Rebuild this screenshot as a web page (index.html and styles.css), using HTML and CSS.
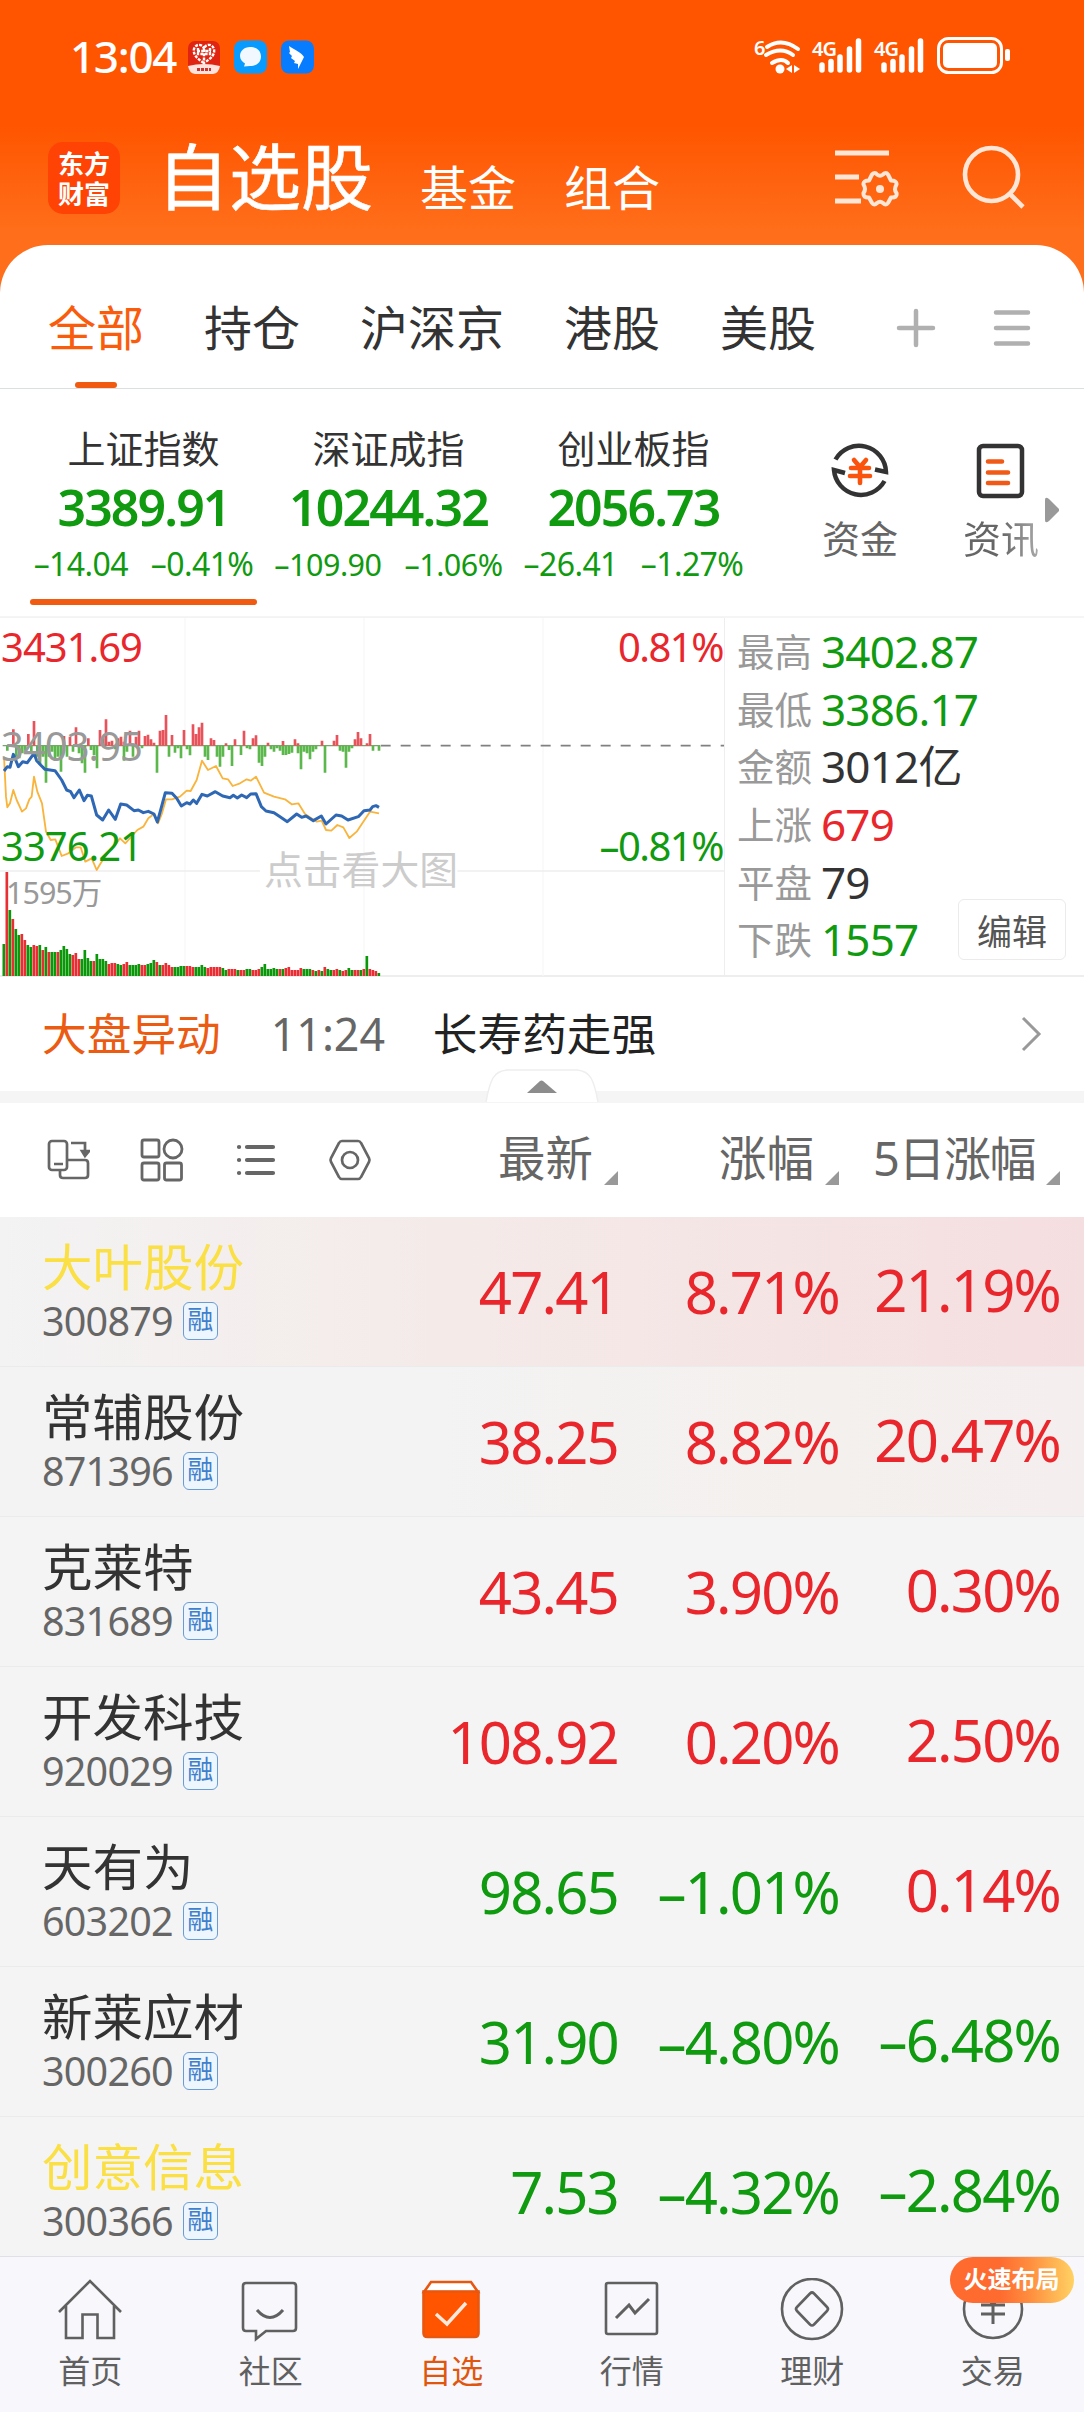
FILE: index.html
```html
<!DOCTYPE html>
<html lang="zh-CN">
<head>
<meta charset="utf-8">
<title>自选股</title>
<link rel="stylesheet" href="styles.css">
</head>
<body>
<header class="hero">
  <div class="status">
    <span class="clock">13:04</span>
    <svg class="apps" width="126" height="34" viewBox="0 0 126 34">
      <rect width="32" height="32" y="1" rx="7" fill="#e02412"/>
      <g fill="none" stroke="#fff" stroke-width="2.4" stroke-dasharray="3 1.2"><path d="M16 23C8 18 5 14 6 9c2-6 9-5 10 0 1-5 8-6 10 0 1 5-2 9-10 14z"/><path d="M10 8v6h5M22 8v6h-5M16 9v12M9 11h14"/></g>
      <path d="M0 26q16-4 32 0-1 7-7 8H7q-6-1-7-8z" fill="#ffe3dc"/><path d="M9 29.500h14" stroke="#c33" stroke-width="3" stroke-dasharray="3 1"/>
      <rect x="46" width="33" height="33" y=".5" rx="8" fill="#079bff"/>
      <path d="M62 7c7 0 11 4 11 9.500S69 26 62 26l-6 .5 1-3c-3-2-5-4-5-7.500C52 11 56 7 62 7z" fill="#f1f8ff"/>
      <rect x="93" width="33" height="33" y=".5" rx="8" fill="#087cff"/>
      <path d="M101 6c6 4 12 6 15 11l-6 12v-5l-4-1 1-2-4-3 1-2-3-3 1-1z" fill="#fff"/>
    </svg>
    <svg class="signals" width="260" height="56" viewBox="0 -8 260 56" fill="#fff" stroke-linecap="round">
      <text x="4" y="17" class="sig-text">6</text>
      <g fill="none" stroke="#fff" stroke-width="4"><path d="M17 9Q32-1 48 11M16 17q15-9 27 0M22 25q10-6 16 0"/></g>
      <circle cx="30" cy="31" r="4.500"/><path d="M36 31l6-4v8zM50 31l-6-4v8z"/>
      <text x="62" y="18" class="sig-text">4G</text>
      <g stroke="#fff" stroke-width="5.500"><path d="M72 27v5M81 23.500v8.500M90 19v13M99.500 11v21M108.500 3v29"/></g>
      <text x="124" y="18" class="sig-text">4G</text>
      <g stroke="#fff" stroke-width="5.500"><path d="M134 27v5M143 23.500v8.500M152 19v13M161.500 11v21M170.500 3v29"/></g>
      <rect x="188.500" y=".5" width="63" height="34" rx="10" fill="none" stroke="#fff" stroke-width="3"/>
      <rect x="193" y="5" width="54" height="25" rx="5"/><rect x="255" y="11" width="5" height="12" rx="2"/>
    </svg>
  </div>
  <div class="topnav">
    <div class="logo"><span>东方</span><span>财富</span></div>
    <span class="title">自选股</span>
    <span class="subtitle">基金</span>
    <span class="subtitle">组合</span>
    <svg class="ico-filter" width="64" height="58" viewBox="0 0 64 58" fill="none" stroke="#ffe6d6" stroke-width="5">
      <path d="M0 4h54M0 28h24M0 52h26"/>
      <path stroke-width="4" stroke-linejoin="round" d="M37 25.500q3-3 5 0 3 2.500 6 0 3-3 5 0l3 6q6 0 5.500 4-3 5 0 8.500 1 5-5.500 4.500l-3 5.500q-2 3-5 0-3-2.500-6 0-3 3-5 0l-3-5.500q-6 .5-5.500-4.500 3-4 0-8.500-.5-4 5.500-4z"/><circle cx="45" cy="40" r="4" fill="#ffe6d6" stroke="none"/>
    </svg>
    <svg class="ico-search" width="64" height="64" viewBox="0 0 64 64" fill="none" stroke="#ffe6d6" stroke-width="4.600"><circle cx="29.500" cy="29.500" r="26.500"/><path d="M48 49l13 13"/></svg>
  </div>
</header>

<nav class="tabs">
  <span class="tab active">全部</span><span class="tab">持仓</span><span class="tab">沪深京</span><span class="tab">港股</span><span class="tab">美股</span>
  <svg class="ico-plus" width="40" height="40" viewBox="0 0 40 40" stroke="#b0b0b0" stroke-width="4.500" stroke-linecap="round"><path d="M3 20h34M20 3v34"/></svg>
  <svg width="38" height="40" viewBox="0 0 38 40" stroke="#b0b0b0" stroke-width="4.500" stroke-linecap="round"><path d="M3 4.500h32M3 20h32M3 35.500h32"/></svg>
</nav>

<section class="indices">
  <div class="index active"><span class="iname">上证指数</span><span class="ival">3389.91</span><span class="isub"><b>–14.04</b><b>–0.41%</b></span></div>
  <div class="index"><span class="iname">深证成指</span><span class="ival">10244.32</span><span class="isub small"><b>–109.90</b><b>–1.06%</b></span></div>
  <div class="index"><span class="iname">创业板指</span><span class="ival">2056.73</span><span class="isub"><b>–26.41</b><b>–1.27%</b></span></div>
  <div class="quick funds">
    <svg width="60" height="60" viewBox="0 0 60 60" fill="none" stroke="#333" stroke-width="4.500"><path d="M5.500 18.500A27 27 0 0 1 56 31l-11-2.500M54.500 40A27 27 0 0 1 4 29l11 3"/><g stroke="#f9530d" stroke-width="4.600" stroke-linecap="round"><path d="M24 19l6 7 6-7M21 27h18M20 35h20M30 27v15"/></g></svg>
    <span>资金</span>
  </div>
  <div class="quick news">
    <svg width="50" height="60" viewBox="0 0 50 60" fill="none" stroke="#333" stroke-width="4.500"><rect x="3" y="5" width="43" height="50" rx="4"/><g stroke="#f15a16" stroke-width="4.600" stroke-linecap="round"><path d="M12 20.500h14M12 31.500h20M12 42h20"/></g></svg>
    <span class="fade">资讯</span>
  </div>
  <svg class="more" width="16" height="26" viewBox="0 0 16 26"><path d="M1 3Q1-1 5 2L15 12v2L5 24Q1 27 1 23z" fill="#999"/></svg>
</section>

<section class="market">
  <div class="chart">
    <svg id="plot" width="724" height="359" viewBox="0 21 2172 1077" preserveAspectRatio="none"></svg>
    <span class="lbl hi">3431.69</span><span class="lbl hi-p">0.81%</span>
    <span class="lbl mid">3403.95</span>
    <span class="lbl lo">3376.21</span><span class="lbl lo-p">–0.81%</span>
    <span class="lbl vol">1595万</span><span class="hint">点击看大图</span>
  </div>
  <div class="stats">
    <div><i>最高</i><span class="down">3402.87</span></div>
    <div><i>最低</i><span class="down">3386.17</span></div>
    <div><i>金额</i><span>3012亿</span></div>
    <div><i>上涨</i><span class="up">679</span></div>
    <div><i>平盘</i><span>79</span></div>
    <div><i>下跌</i><span class="down">1557</span></div>
    <button class="edit">编辑</button>
  </div>
</section>

<section class="alert">
  <span class="alert-tag">大盘异动</span><span class="alert-time">11:24</span><span class="alert-text">长寿药走强</span>
  <svg width="22" height="36" viewBox="0 0 22 36" fill="none" stroke="#999" stroke-width="3"><path d="M2 2l16 16L2 34"/></svg>
</section>
<div class="divider"><svg class="handle" width="114" height="34" viewBox="0 0 114 34"><path d="M1 33Q4 16 8 9T22 1h70q10 1 14 8t7 24" fill="#fff" stroke="#eee" stroke-width="1.500"/><path d="M42 24l13-12q1.500-1 3 0l14 12z" fill="#8c8c8c"/></svg></div>

<section class="toolbar">
  <div class="tools">
    <svg width="44" height="44" viewBox="0 0 44 44" fill="none" stroke="#666" stroke-width="2.700"><rect x="3" y="3" width="18" height="29" rx="3"/><path d="M8 26h9M25 5h14v12M21 22h18q3 0 3 3v12q0 3-3 3H17q-3 0-3-3v-5"/><path d="M36 13h7l-4 5z" fill="#666"/></svg>
    <svg width="44" height="44" viewBox="0 0 44 44" fill="none" stroke="#666" stroke-width="2.800"><rect x="2" y="2" width="17" height="17" rx="2"/><circle cx="33" cy="11" r="9"/><rect x="2" y="25" width="17" height="17" rx="2"/><rect x="24.500" y="25" width="17" height="17" rx="2"/></svg>
    <svg width="44" height="44" viewBox="0 0 44 44" fill="none" stroke="#666" stroke-width="4.200" stroke-linecap="round"><path d="M13 9h26M13 22h26M13 35h26M5 9h.1M5 22h.1M5 35h.1"/></svg>
    <svg width="44" height="44" viewBox="0 0 44 44" fill="none" stroke="#666" stroke-width="2.700"><path d="M14 3h16q2 0 3 2l8 15q1 2 0 4l-8 15q-1 2-3 2H14q-2 0-3-2L3 24q-1-2 0-4l8-15q1-2 3-2z"/><circle cx="22" cy="22" r="8"/></svg>
  </div>
  <span class="sort">最新</span><span class="sort">涨幅</span><span class="sort days">5日涨幅</span>
</section>

<main class="list">
  <div class="row hot"><div class="who"><span class="name marked">大叶股份</span><span class="code">300879<em>融</em></span></div><span class="up">47.41</span><span class="up">8.71%</span><span class="f up">21.19%</span></div>
  <div class="row warm"><div class="who"><span class="name">常辅股份</span><span class="code">871396<em>融</em></span></div><span class="up">38.25</span><span class="up">8.82%</span><span class="f up">20.47%</span></div>
  <div class="row"><div class="who"><span class="name">克莱特</span><span class="code">831689<em>融</em></span></div><span class="up">43.45</span><span class="up">3.90%</span><span class="f up">0.30%</span></div>
  <div class="row"><div class="who"><span class="name">开发科技</span><span class="code">920029<em>融</em></span></div><span class="up">108.92</span><span class="up">0.20%</span><span class="f up">2.50%</span></div>
  <div class="row"><div class="who"><span class="name">天有为</span><span class="code">603202<em>融</em></span></div><span class="down">98.65</span><span class="down">–1.01%</span><span class="f up">0.14%</span></div>
  <div class="row"><div class="who"><span class="name">新莱应材</span><span class="code">300260<em>融</em></span></div><span class="down">31.90</span><span class="down">–4.80%</span><span class="f down">–6.48%</span></div>
  <div class="row last"><div class="who"><span class="name marked">创意信息</span><span class="code">300366<em>融</em></span></div><span class="down">7.53</span><span class="down">–4.32%</span><span class="f down">–2.84%</span></div>
</main>

<footer class="tabbar">
  <div><svg width="66" height="66" viewBox="0 0 66 66"><path d="M2 34L33 3l31 31M9 28v32h16.500V36.500h15V60H57V28"/></svg><span>首页</span></div>
  <div><svg width="66" height="66" viewBox="0 0 66 66"><path d="M8 5h47q3 0 3 3v42q0 3-3 3H28l-10 8v-8H8q-3 0-3-3V8q0-3 3-3z"/><path d="M19 32q13 15 26 0" stroke-width="3"/></svg><span>社区</span></div>
  <div class="on"><svg width="66" height="66" viewBox="0 0 66 66"><path d="M13 4h40l7 10H6z" fill="#fff"/><path d="M5.500 13.500h55V55q0 4-4 4h-47q-4 0-4-4z" fill="#ff5500"/><path d="M18 36l11 10 19-21" stroke="#ffe9dc" stroke-width="3.500"/></svg><span>自选</span></div>
  <div><svg width="66" height="66" viewBox="0 0 66 66"><rect x="7" y="5" width="51" height="51" rx="2"/><path d="M17 40l13-13 6 8 14-14" stroke-width="3"/></svg><span>行情</span></div>
  <div><svg width="66" height="66" viewBox="0 0 66 66"><circle cx="33" cy="31" r="30"/><path d="M31 15.500q2-2 4 0L48 29q2 2 0 4L35 46.500q-2 2-4 0L18 33q-2-2 0-4z"/></svg><span>理财</span></div>
  <div><svg width="66" height="66" viewBox="0 0 66 66"><circle cx="33" cy="31" r="29"/><path d="M25 15l8 12 8-12M21 27h24M21 36h24M33 27v19" stroke-width="3"/></svg><span>交易</span><strong class="promo">火速布局</strong></div>
</footer>
<script src="chart.js"></script>
</body>
</html>
```
FILE: styles.css
```css
* { box-sizing: border-box; }
body { margin: 0; width: 1084px; height: 2412px; overflow: hidden; background: #fff; color: #333; font-family: "Noto Sans", "Noto Sans CJK SC", sans-serif; }
svg { display: block; flex: none; }
span, i, b, em { white-space: nowrap; font-style: normal; font-weight: 400; }
.up { color: #e8262b; }
.down { color: #109a10; }

.hero { height: 292px; background: linear-gradient(#ff5500 125px, #ff6e1a 230px, #ff6e1a); color: #fff; }
.status { height: 114px; display: flex; align-items: center; padding: 0 74px 0 70px; }
.status .clock { font-size: 44px; font-weight: 500; letter-spacing: -1.300px; line-height: 60px; width: 118px; margin-top: -2px; }
.signals { margin-left: auto; margin-top: 1px; }
.sig-text { font: 600 20px "Noto Sans", sans-serif; letter-spacing: -1px; }
.topnav { height: 131px; display: flex; align-items: center; padding: 0 58px 0 48px; }
.logo { width: 72px; height: 72px; border-radius: 15px; background: #ff4304; display: flex; flex-direction: column; justify-content: center; font: 26px/30px "Noto Sans CJK SC", sans-serif; text-align: center; margin-top: -4px; }
.logo span { font-weight: 700; }
.topnav .title { font-size: 72px; font-weight: 400; -webkit-text-stroke: .6px #fff; line-height: 90px; margin-left: 37px; margin-top: -8px; }
.subtitle { font-size: 48px; line-height: 60px; margin-left: 48px; margin-top: 16px; }
.title + .subtitle { margin-left: 47px; }
.ico-filter { margin-left: auto; margin-top: -3px; }
.ico-search { margin-left: 63px; margin-top: -6px; }

.tabs { margin-top: -47px; height: 144px; border-radius: 48px 48px 0 0; background: #fff; border-bottom: 1px solid #dcdfe0; display: flex; align-items: center; gap: 60px; padding: 20px 0 0 48px; }
.tab { font-size: 48px; line-height: 126px; height: 123px; position: relative; }
.tab.active { color: #f95c0c; }
.tab.active::after { content: ""; position: absolute; left: 27px; bottom: 0; width: 42px; height: 6px; border-radius: 3px; background: #f15a11; }
.tabs svg { margin-top: 3px; }
.tabs .ico-plus { margin: 3px -3px 0 20px; }

.indices { height: 229px; display: flex; padding: 31px 24px 0 21px; border-bottom: 2px solid #f5f5f5; }
.index { width: 245px; height: 186px; display: flex; flex-direction: column; align-items: center; position: relative; }
.iname { font-size: 38px; line-height: 56px; }
.index .ival { font-size: 50px; font-weight: 600; line-height: 62px; letter-spacing: -1.900px; color: #109a10; }
.isub { font-size: 32px; line-height: 52px; display: flex; gap: 23px; color: #109a10; letter-spacing: -.6px; margin-left: 0; }
.isub.small { font-size: 30.500px; letter-spacing: -.5px; }
.index.active::after { content: ""; position: absolute; left: 9px; bottom: 1px; width: 227px; height: 6px; border-radius: 3px; background: #f15a11; }
.quick { display: flex; flex-direction: column; align-items: center; font-size: 38px; color: #666; line-height: 60px; padding-top: 21px; gap: 7px; }
.funds { margin-left: 66px; }
.news { margin-left: 65px; }
.fade { background: linear-gradient(90deg, #666 50%, #aaa); -webkit-background-clip: text; color: transparent; }
.more { margin: 77px 0 0 5px; }

.market { height: 359px; display: flex; border-bottom: 2px solid #eee; }
.chart { width: 725px; border-right: 1px solid #eee; position: relative; }
#plot { margin-top: -1px; }
.lbl, .hint { position: absolute; font-size: 40px; line-height: 50px; letter-spacing: -1px; }
.hi { left: 1px; top: 4px; color: #e8262b; }
.hi-p { right: 1px; top: 4px; color: #e8262b; }
.mid { left: 1px; top: 103px; color: #999; }
.lo { left: 1px; top: 203px; color: #109a10; }
.lo-p { right: 1px; top: 203px; color: #109a10; }
.vol { left: 6px; top: 249px; font-size: 30.500px; color: #999; }
.hint { left: 264px; top: 226px; font-size: 38.800px; letter-spacing: 0; color: #ccc; }
.hi-p, .lo-p { letter-spacing: -1.500px; }
.stats { width: 359px; padding: 5px 0 0 12px; position: relative; }
.stats div { height: 57.600px; display: flex; align-items: center; gap: 9px; font-size: 44px; line-height: 57px; letter-spacing: -.8px; }
.stats i { font-size: 37.500px; color: #999; letter-spacing: 0; }
.edit { position: absolute; left: 233px; top: 281px; width: 108px; height: 61px; padding: 0; border: 1px solid #ebebeb; border-radius: 6px; background: #fff; font: 35px/54px "Noto Sans CJK SC", sans-serif; color: #555; }

.alert { height: 114px; display: flex; align-items: center; padding: 0 41px 0 42px; font-size: 44.700px; line-height: 60px; }
.alert-tag { color: #ec5b12; }
.alert-time { margin-left: 50px; width: 162px; color: #666; letter-spacing: 0; }
.alert-text { color: #222; }
.alert svg { margin-left: auto; }
.divider { height: 12px; background: #f5f5f5; position: relative; }
.handle { position: absolute; left: 485px; top: -22px; }

.toolbar { height: 114px; display: grid; grid-template-columns: 417px 201px 221px 221px; align-items: center; color: #666; }
.tools { display: flex; gap: 50px; padding-left: 46px; }
.sort { font-size: 47.500px; line-height: 70px; justify-self: end; padding-right: 25px; position: relative; margin-top: -4px; }
.sort.days { letter-spacing: -1.500px; font-size: 47px; }
.sort::after { content: ""; position: absolute; right: 0; bottom: 8px; border: 7.500px solid; border-color: transparent #999 #999 transparent; }

.row { height: 150px; display: grid; grid-template-columns: 417px 201px 221px 221px; align-items: center; background: #f4f4f4; border-bottom: 1px solid #ebebeb; font-size: 58px; letter-spacing: -1.800px; }
.row.hot { background: linear-gradient(90deg, #f3f3f3, #f4ebe9 40%, #f5dee0); }
.row.warm { background: linear-gradient(90deg, #f3f3f3 40%, #f4f0ee 75%, #f4efee); }
.row.last { height: 139px; border: 0; align-items: start; }
.row > span { justify-self: end; line-height: 80px; margin-top: 1px; }
.row > .f { margin-top: -4px; }
.row.last > span { margin-top: 35px; }
.row.last > .f { margin-top: 33px; }
.who { display: flex; flex-direction: column; height: 149px; padding: 15px 0 0 42px; letter-spacing: 0; }
.name { font-size: 50.500px; line-height: 70px; }
.name.marked { color: #fadf45; }
.code { font-size: 39.500px; line-height: 40px; height: 40px; letter-spacing: -.8px; color: #666; display: flex; align-items: center; gap: 10px; margin-top: -1px; }
.code em { width: 35px; height: 38px; border: 1.500px solid #6a9bd6; border-radius: 6px; background: #edf5fd; color: #3f7fcb; font-size: 26px; line-height: 33px; text-align: center; letter-spacing: 0; }

.tabbar { height: 157px; background: #f7f7fc; border-top: 1px solid #dfe1e6; display: grid; grid-template-columns: repeat(6, 180.500px); }
.tabbar div { display: flex; flex-direction: column; align-items: center; padding-top: 21px; font-size: 32px; line-height: 54px; color: #606060; position: relative; }
.tabbar svg { fill: none; stroke: #606060; stroke-width: 2.600px; }
.tabbar .on { color: #e0560f; }
.tabbar .on svg { stroke: #e8570f; }
.promo { position: absolute; left: 47px; top: 0; width: 124px; height: 46px; border-radius: 23px; background: linear-gradient(90deg, #ff6a2f 40%, #ff8f3f 65%, #ffd263); color: #fff; font-size: 24px; line-height: 44px; text-align: center; }
```
FILE: chart.js
```js
// Intraday plot: breadth bars around the previous close, price and average lines, volume.
const plot = document.getElementById('plot');
const STEP = 9, ORIGIN = 12, CLOSE = 407, BASE = 1098;
let out = '';
const line = (d, color, w, extra = '') => {
  out += `<path d="${d}" fill="none" stroke="${color}" stroke-width="${w}" ${extra}/>`;
};

line('M0 22H2172', '#f3f3f3', 4);
line('M555 24V1098M1092 24V1098M1629 24V1098', '#f8f8f8', 4);
line('M0 783H780M1372 783H2172', '#eeeeee', 5);

const rises = [[40,358],[85,372],[102,333],[192,378],[210,380],[228,352],[265,385],[300,360],[309,385],[318,328],[327,395],[336,392],[354,385],[363,380],[372,395],[390,362],[408,380],[417,362],[435,378],[444,374],[453,388],[462,398],[480,362],[489,360],[498,315],[516,375],[552,360],[579,343],[588,372],[597,352],[606,338],[633,385],[642,390],[678,400],[705,388],[732,362],[759,385],[768,376],[804,398],[849,393],[885,388],[894,400],[966,392],[1002,392],[1011,375],[1065,388],[1074,366],[1083,385],[1101,400],[1110,372]];
const falls = [[22,422],[49,440],[58,445],[67,430],[76,422],[94,425],[112,440],[120,465],[129,440],[138,518],[147,440],[156,425],[165,452],[174,440],[183,485],[201,440],[219,425],[237,430],[246,460],[255,488],[273,420],[282,435],[291,475],[345,418],[372,452],[381,425],[399,440],[426,415],[471,488],[507,440],[525,428],[534,415],[543,445],[561,418],[570,436],[615,440],[624,450],[651,440],[660,470],[669,440],[687,420],[696,468],[723,435],[741,415],[750,418],[777,458],[786,468],[795,440],[813,418],[822,425],[831,415],[840,422],[849,435],[858,435],[867,432],[876,428],[894,430],[903,478],[912,425],[921,430],[930,448],[939,425],[948,418],[975,488],[1020,422],[1029,425],[1038,473],[1047,425],[1056,415],[1119,422],[1137,422]];
line('M8 407H1140', '#7aa46f', 4);
line(rises.map(([x, y]) => `M${x} ${CLOSE}V${y}`).join(''), '#e8525a', 8);
line(falls.map(([x, y]) => `M${x} ${CLOSE}V${y}`).join(''), '#5cb84c', 8);
line('M1142 407H2172', '#808080', 5, 'stroke-dasharray="30 30"');

const average = '12,440 18,560 22,592 30,580 40,540 50,570 66,605 78,595 88,568 95,560 102,500 112,545 126,580 138,665 152,690 166,688 185,738 205,730 228,712 242,712 256,755 275,745 290,780 302,760 330,720 346,705 360,685 376,700 412,660 430,650 445,625 462,612 474,640 486,610 498,568 516,568 540,560 560,542 572,543 590,510 606,452 624,480 648,468 668,505 684,508 698,528 720,520 740,508 752,512 768,500 792,548 822,560 855,568 875,583 895,580 915,612 950,635 965,632 978,660 994,662 1012,645 1030,652 1048,684 1070,665 1110,605 1137,610';
const price = '12,483 22,470 30,472 40,433 55,470 68,455 82,458 102,430 110,452 122,465 135,478 165,482 185,510 200,540 212,545 222,563 238,540 252,572 262,556 274,558 290,615 308,630 326,600 346,628 362,582 380,585 402,602 415,600 430,608 445,604 462,612 472,636 482,600 496,548 516,550 530,565 544,588 560,578 570,582 580,570 590,580 606,553 622,558 646,545 668,558 690,563 700,556 712,564 725,555 740,563 752,552 768,551 784,590 798,603 822,608 840,620 862,635 890,612 905,622 918,618 940,632 964,618 978,642 1008,615 1025,618 1044,630 1075,620 1092,602 1110,600 1118,590 1128,587 1137,592';
line('M' + average, '#f9b43c', 5.5, 'stroke-linejoin="round"');
line('M' + price, '#2e67b4', 9, 'stroke-linejoin="round"');

const volume = [32,104,66,57,47,41,42,36,31,29,31,30,31,26,29,24,24,24,24,26,30,27,22,21,23,17,17,26,18,15,15,22,17,17,15,12,13,13,12,11,12,14,11,11,11,12,11,11,12,13,16,14,11,11,13,11,9,9,9,10,10,10,10,9,9,9,11,9,8,9,9,9,9,8,6,7,7,7,6,6,6,7,7,6,6,7,9,12,7,7,8,7,7,7,8,9,6,6,6,8,7,7,7,6,5,6,5,9,7,6,6,7,6,5,6,8,6,6,6,6,7,20,7,6,5,3];
const tone = 'GRGRGGRRGGRRGRGRGGRGGGGRRRGGGGRGGGGRRRGGRRGGGGRRGGGRGRRRRGGGGRRRGGGGRRRRRGGRRRGRRGGRRRGGGGGGRGRRRRRRGGGRGRGRGGRRGRRGGRRGRGRRRGGRRG';
volume.forEach((h, i) => {
  out += `<rect x="${ORIGIN + i * STEP - 4.5}" y="${BASE - h * 3}" width="8" height="${h * 3}" fill="${tone[i] === 'R' ? '#ea2c33' : '#0a980a'}"/>`;
});
plot.innerHTML = out;
```
